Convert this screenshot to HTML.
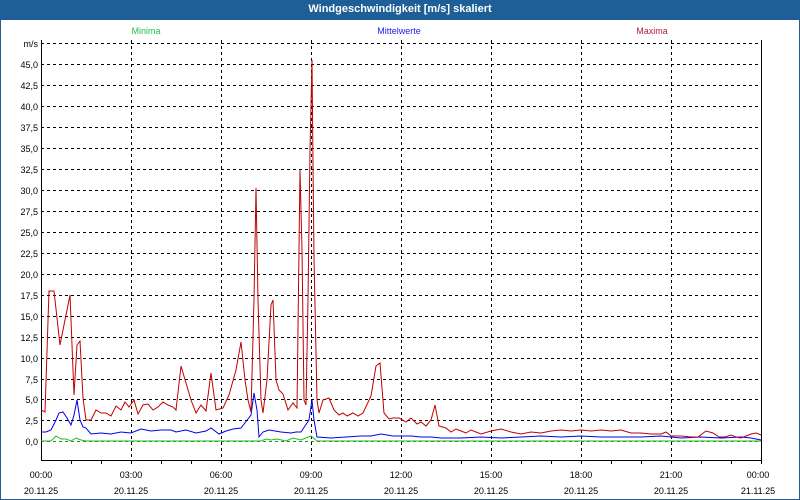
<!DOCTYPE html>
<html><head><meta charset="utf-8"><style>
html,body{margin:0;padding:0;background:#fff;}
#w{position:relative;width:800px;height:500px;box-sizing:border-box;border:1px solid #1d5f96;border-top:none;background:#fff;font-family:"Liberation Sans",sans-serif;}
#t{position:absolute;left:0;top:0;width:798px;height:20px;background:#1d5f96;color:#fff;font-weight:bold;font-size:11px;text-align:center;line-height:19px;}
svg{position:absolute;left:0;top:0;}
text{font-family:"Liberation Sans",sans-serif;font-size:9px;}
</style></head><body><div id="w"><div id="t">Windgeschwindigkeit [m/s] skaliert</div>
<svg width="800" height="500" viewBox="0 0 800 500">
<g font-size="9">
<text x="145" y="34" fill="#22c055" text-anchor="middle">Minima</text>
<text x="398" y="34" fill="#2020ee" text-anchor="middle">Mittelwerte</text>
<text x="651" y="34" fill="#b02040" text-anchor="middle">Maxima</text>
</g>
<g stroke="#000" stroke-dasharray="3,3" stroke-width="1">
<path d="M40 43.5H760M40 64.5H760M40 85.5H760M40 106.5H760M40 127.5H760M40 148.5H760M40 169.5H760M40 190.5H760M40 211.5H760M40 232.5H760M40 253.5H760M40 274.5H760M40 295.5H760M40 316.5H760M40 337.5H760M40 358.5H760M40 379.5H760M40 399.5H760M40 420.5H760"/>
<path d="M130.5 40V460M220.5 40V460M310.5 40V460M400.5 40V460M490.5 40V460M580.5 40V460M670.5 40V460"/>
</g>
<path d="M40 441.5H760" stroke="#2a8a2a" stroke-dasharray="3,3"/>
<g stroke="#000" fill="none">
<path d="M40.5 40V460.5H760.5V40"/>
<path d="M70.5 460V464M100.5 460V464M130.5 460V464M160.5 460V464M190.5 460V464M220.5 460V464M250.5 460V464M280.5 460V464M310.5 460V464M340.5 460V464M370.5 460V464M400.5 460V464M430.5 460V464M460.5 460V464M490.5 460V464M520.5 460V464M550.5 460V464M580.5 460V464M610.5 460V464M640.5 460V464M670.5 460V464M700.5 460V464M730.5 460V464M760.5 460V464"/>
</g>
<g fill="#000" text-anchor="end">
<text x="37" y="47">m/s</text><text x="37" y="68">45,0</text><text x="37" y="89">42,5</text><text x="37" y="110">40,0</text><text x="37" y="131">37,5</text><text x="37" y="152">35,0</text><text x="37" y="173">32,5</text><text x="37" y="194">30,0</text><text x="37" y="215">27,5</text><text x="37" y="236">25,0</text><text x="37" y="257">22,5</text><text x="37" y="278">20,0</text><text x="37" y="299">17,5</text><text x="37" y="320">15,0</text><text x="37" y="341">12,5</text><text x="37" y="362">10,0</text><text x="37" y="383">7,5</text><text x="37" y="403">5,0</text><text x="37" y="424">2,5</text><text x="37" y="445">0,0</text>
</g>
<g fill="#000" text-anchor="middle">
<text x="40" y="478">00:00</text><text x="40" y="494">20.11.25</text>
<text x="130" y="478">03:00</text><text x="130" y="494">20.11.25</text>
<text x="220" y="478">06:00</text><text x="220" y="494">20.11.25</text>
<text x="310" y="478">09:00</text><text x="310" y="494">20.11.25</text>
<text x="400" y="478">12:00</text><text x="400" y="494">20.11.25</text>
<text x="490" y="478">15:00</text><text x="490" y="494">20.11.25</text>
<text x="580" y="478">18:00</text><text x="580" y="494">20.11.25</text>
<text x="670" y="478">21:00</text><text x="670" y="494">20.11.25</text>
<text x="757" y="478">00:00</text><text x="757" y="494">21.11.25</text>
</g>
<polyline fill="none" stroke="#22bb22" points="40,441 50,441 55,436 60,439 65,439 70,441 75,438 80,440 85,441 260,441 265,439 270,440 276,439 285,441 292,438 300,440 310,436 316,441 760,441"/>
<polyline fill="none" stroke="#0000ee" points="40,432 45,432 50,430 55,420 58,413 62,412 66,418 70,425 73,415 76,400 79,420 82,427 85,428 90,434 100,433 110,434 120,432 130,433 140,429 150,431 160,430 170,430 175,432 185,430 195,433 205,431 210,428 218,434 225,431 232,429 240,428 250,415 253,393 256,410 258,437 262,432 268,430 280,432 290,433 295,432 300,432 308,420 311,400 313,420 316,437 330,438 345,437 360,436 370,436 380,434 392,436 410,436 420,437 430,437 440,438 460,438 480,437 500,438 520,437 540,436 560,437 580,436 600,437 620,437 640,437 660,436 680,438 700,437 720,438 740,437 750,438 760,440"/>
<polyline fill="none" stroke="#c00000" points="40,410 44,412 48,291 53,291 59,345 66,310 69,295 73,395 76,345 79,341 82,398 85,420 90,420 95,410 100,413 105,413 110,416 115,406 120,410 124,402 128,407 133,400 137,414 142,405 147,404 152,410 157,407 162,402 167,405 172,407 175,410 180,366 185,383 190,400 195,413 200,405 205,411 210,373 215,410 222,408 228,395 235,370 240,342 244,380 247,400 250,412 253,300 255,188 257,300 260,400 262,413 266,380 270,305 272,300 275,380 278,390 282,394 287,410 292,403 296,408 299,170 301,250 303,400 305,405 307,300 309,150 311,60 312,165 313,258 316,400 318,413 322,400 328,398 333,410 338,415 342,413 346,416 352,413 357,416 362,413 370,396 375,366 379,363 383,413 388,419 392,418 398,418 405,422 410,418 416,424 420,422 425,426 430,420 434,405 438,426 445,428 450,432 455,429 460,431 465,433 470,430 480,434 490,431 500,429 510,432 520,434 530,432 540,433 550,431 560,430 570,431 580,430 590,431 600,430 610,431 620,430 630,433 640,433 650,434 660,434 665,432 670,436 680,436 690,437 697,437 705,431 712,433 718,437 724,437 730,435 735,437 740,438 745,436 750,434 755,433 760,435"/>
</svg></div></body></html>
